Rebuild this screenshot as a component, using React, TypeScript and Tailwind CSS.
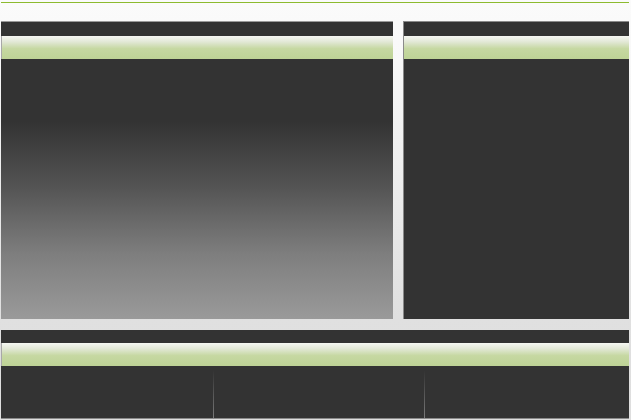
import React from "react";

function Header({ leftBorder }: { leftBorder?: boolean }) {
  return (
    <div
      className={
        "h-[23px] bg-[linear-gradient(to_bottom,#f6f7f3_0%,#e2e8d6_25%,#c6d8a2_55%,#bed396_100%)] " +
        (leftBorder ? "border-l border-[#a8a8a8]" : "")
      }
    />
  );
}

export default function App() {
  return (
    <div className="w-[631px] h-[420px] overflow-hidden pl-px pr-[2px] pt-[2px] bg-[linear-gradient(to_bottom,#fbfbfb_0%,#f8f8f8_15%,#e0e0e0_75%,#dedede_100%)]">
      <div className="h-px bg-[#8dbb30]" />
      <div className="mt-[18px] flex h-[298px] gap-[10px]">
        <div className="w-[392px] flex flex-col border-t border-[#9a9a9a]">
          <div className="h-[14px] bg-[#333333]" />
          <Header leftBorder />
          <div className="flex-1 bg-[linear-gradient(to_bottom,#333333_0%,#333333_24%,#555555_50%,#7e7e7e_75%,#9a9a9a_100%)]" />
        </div>
        <div className="flex-1 flex flex-col border-t border-l border-[#8a8a8a]">
          <div className="h-[14px] bg-[#333333]" />
          <Header />
          <div className="flex-1 bg-[#333333]" />
        </div>
      </div>
      <div className="mt-[11px] h-[89px] flex flex-col border-b border-[#8a8a8a]">
        <div className="h-[13px] bg-[#333333]" />
        <Header leftBorder />
        <div className="flex-1 flex bg-[#333333]">
          <div className="w-[213px] flex justify-end pt-[4px]">
            <div className="w-px h-full bg-[linear-gradient(to_bottom,#333333,#7a7a7a)]" />
          </div>
          <div className="w-[211px] flex justify-end pt-[4px]">
            <div className="w-px h-full bg-[linear-gradient(to_bottom,#333333,#7a7a7a)]" />
          </div>
          <div className="flex-1" />
        </div>
      </div>
    </div>
  );
}
